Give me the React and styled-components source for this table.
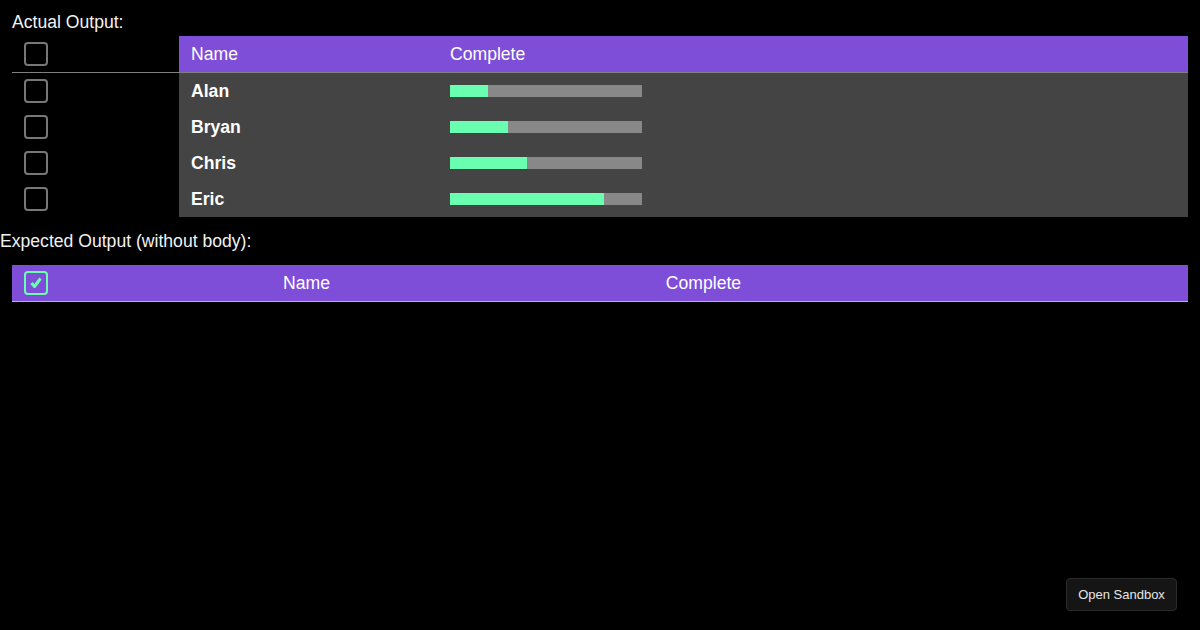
import React from 'react';
import styled, { createGlobalStyle } from 'styled-components';

const people = [
  { name: 'Alan', complete: 20 },
  { name: 'Bryan', complete: 30 },
  { name: 'Chris', complete: 40 },
  { name: 'Eric', complete: 80 },
];

export default function App() {
  return (
    <>
      <GlobalStyle />
      <Page>
        <Label $indent $gap="4px">Actual Output:</Label>
        <Table>
          <HeadRow $cols="167px 259px 1fr">
            <BoxCell>
              <Checkbox />
            </BoxCell>
            <HeadCell>Name</HeadCell>
            <HeadCell>Complete</HeadCell>
          </HeadRow>
          {people.map((p) => (
            <BodyRow key={p.name}>
              <BoxCell>
                <Checkbox />
              </BoxCell>
              <NameCell>{p.name}</NameCell>
              <BarCell>
                <Bar>
                  <BarFill style={{ width: `${p.complete}%` }} />
                </Bar>
              </BarCell>
            </BodyRow>
          ))}
        </Table>

        <Label $gap="14px">Expected Output (without body):</Label>
        <Table>
          <HeadRow $cols="48px 493px 301px 1fr" $filled>
            <BoxCell>
              <Checkbox $checked>
                <svg width="14" height="14" viewBox="0 0 14 14">
                  <polyline
                    points="2.5,7 5.5,10.5 11.5,2.5"
                    fill="none"
                    stroke="#6affb0"
                    strokeWidth="3"
                    strokeLinejoin="round"
                  />
                </svg>
              </Checkbox>
            </BoxCell>
            <HeadCell $center>Name</HeadCell>
            <HeadCell $center>Complete</HeadCell>
            <HeadCell />
          </HeadRow>
        </Table>
      </Page>
      <SandboxBtn>Open Sandbox</SandboxBtn>
    </>
  );
}

const GlobalStyle = createGlobalStyle`
  html, body {
    margin: 0;
    padding: 0;
    background: #000;
    color: #fff;
    font-family: 'Liberation Sans', Arial, sans-serif;
    font-size: 17.6px;
  }
`;

const Page = styled.div`
  width: 1200px;
  height: 630px;
  background: #000;
  padding-top: 12px;
  box-sizing: border-box;
`;

const Label = styled.div`
  line-height: 20px;
  margin-left: ${(p) => (p.$indent ? '12px' : '0')};
  margin-bottom: ${(p) => p.$gap};
  color: #f2f2f2;
`;

const Table = styled.div`
  margin: 0 12px 14px;
  display: flex;
  flex-direction: column;
`;

const HeadRow = styled.div`
  display: grid;
  grid-template-columns: ${(p) => p.$cols};
  height: 37px;
  box-sizing: border-box;
  border-bottom: 1px solid rgba(255, 255, 255, 0.5);
  background: ${(p) => (p.$filled ? '#7e4ed8' : 'transparent')};

  & > div:not(:first-child) {
    background: #7e4ed8;
  }
`;

const BodyRow = styled.div`
  display: grid;
  grid-template-columns: 167px 259px 1fr;
  height: 36px;
`;

const BoxCell = styled.div`
  display: flex;
  align-items: center;
  padding-left: 12px;
`;

const HeadCell = styled.div`
  display: flex;
  align-items: center;
  justify-content: ${(p) => (p.$center ? 'center' : 'flex-start')};
  padding: 0 ${(p) => (p.$center ? '0' : '12px')};
  color: #fff;
`;

const NameCell = styled.div`
  display: flex;
  align-items: center;
  padding: 0 12px;
  background: #444;
  font-weight: bold;
  color: #fff;
`;

const BarCell = styled.div`
  display: flex;
  align-items: center;
  padding: 0 12px;
  background: #444;
`;

const Bar = styled.div`
  width: 192px;
  height: 12px;
  background: #888;
`;

const BarFill = styled.div`
  height: 100%;
  background: #6affb0;
`;

const Checkbox = styled.div`
  width: 24px;
  height: 24px;
  box-sizing: border-box;
  border: 2px solid ${(p) => (p.$checked ? '#6affb0' : '#777')};
  border-radius: 4px;
  display: flex;
  align-items: center;
  justify-content: center;
`;

const SandboxBtn = styled.button`
  position: fixed;
  right: 23px;
  bottom: 19px;
  width: 111px;
  height: 33px;
  background: #151515;
  color: #e6e6e6;
  border: 1px solid #2a2a2a;
  border-radius: 4px;
  font-family: 'Liberation Sans', Arial, sans-serif;
  font-size: 13px;
  padding: 0;
  cursor: pointer;
`;
